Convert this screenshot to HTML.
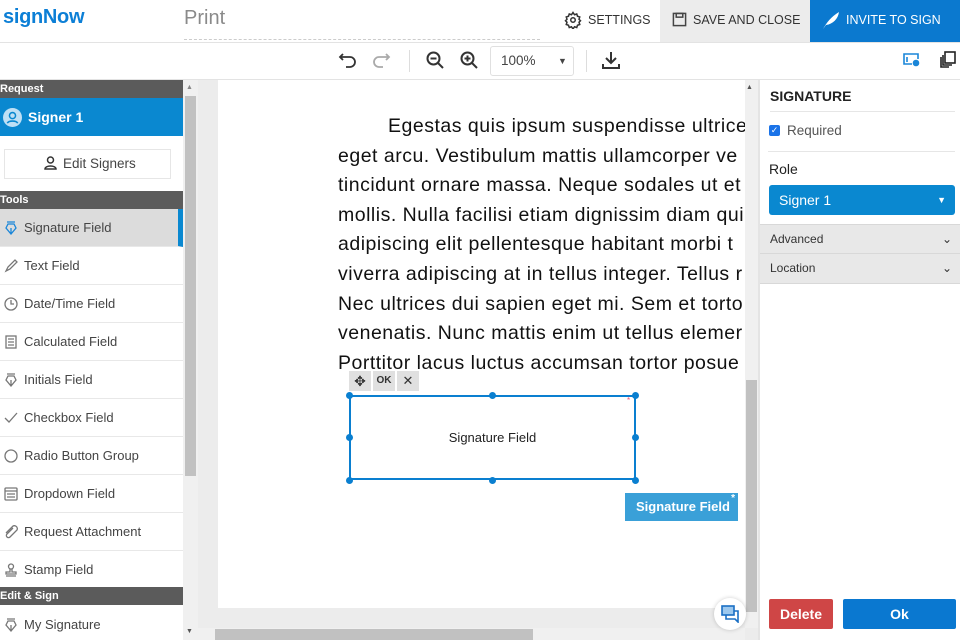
<!DOCTYPE html>
<html><head><meta charset="utf-8"><style>
*{box-sizing:border-box;margin:0;padding:0}
body{width:960px;height:640px;overflow:hidden;font-family:"Liberation Sans",sans-serif;background:#fff;position:relative;color:#333}
.a{position:absolute}
.hdr{left:0;top:0;width:960px;height:43px;border-bottom:1px solid #e3e3e3}
.tb{left:0;top:43px;width:960px;height:37px;border-bottom:1px solid #e3e3e3}
.sec{left:0;width:183px;height:18px;background:#5b5b5b;color:#fff;font-size:11px;font-weight:bold;line-height:18px;padding-left:0}
.it{left:0;width:183px;height:38px;border-bottom:1px solid #e8e8e8;font-size:13px;color:#444;line-height:37px;padding-left:24px}
.it svg{position:absolute;left:4px;top:12px}
.doc{left:338px;font-size:19.5px;letter-spacing:0.5px;color:#111;white-space:nowrap;line-height:29.6px}
.h{width:7px;height:7px;border-radius:50%;background:#0a7fd0;position:absolute}
</style></head><body>
<div class="a hdr"></div>
<div class="a" style="left:3px;top:6px;font-size:20px;font-weight:bold;color:#0c7fd6;letter-spacing:-0.3px">signNow</div>
<div class="a" style="left:184px;top:7px;font-size:20px;color:#8a8a8a">Print</div>
<div class="a" style="left:184px;top:39px;width:356px;border-top:1px dashed #ccc"></div>
<svg class="a" style="left:564px;top:11px" width="18" height="18" viewBox="0 0 24 24" fill="none" stroke="#333" stroke-width="2"><circle cx="12" cy="12" r="3"/><path d="M12 2l2 3 3-1 1 3 3 1-1 3 2 2-2 2 1 3-3 1-1 3-3-1-2 3-2-3-3 1-1-3-3-1 1-3-2-2 2-2-1-3 3-1 1-3 3 1z"/></svg>
<div class="a" style="left:588px;top:13px;font-size:12.5px;color:#333">SETTINGS</div>
<div class="a" style="left:660px;top:0;width:150px;height:42px;background:#ececec"></div>
<svg class="a" style="left:672px;top:12px" width="15" height="15" viewBox="0 0 16 16" fill="none" stroke="#444" stroke-width="1.6"><rect x="1.5" y="1.5" width="13" height="13"/><rect x="4.5" y="1.5" width="7" height="4"/></svg>
<div class="a" style="left:693px;top:13px;font-size:12.5px;color:#333">SAVE AND CLOSE</div>
<div class="a" style="left:810px;top:0;width:150px;height:42px;background:#0b79cf"></div>
<svg class="a" style="left:821px;top:10px" width="20" height="20" viewBox="0 0 20 20"><path d="M2 19C6 12 10 7 18 2 17 9 12 14 5 15z" fill="#fff"/></svg>
<div class="a" style="left:846px;top:13px;font-size:12.5px;color:#fff">INVITE TO SIGN</div>

<div class="a tb"></div>
<svg class="a" style="left:338px;top:50px" width="20" height="20" viewBox="0 0 20 20" fill="none" stroke="#333" stroke-width="1.8"><path d="M5 4L2 7l3 3M2 7h10a5 5 0 010 10H8"/></svg>
<svg class="a" style="left:371px;top:50px" width="20" height="20" viewBox="0 0 20 20" fill="none" stroke="#aaa" stroke-width="1.8"><path d="M15 4l3 3-3 3M18 7H8a5 5 0 000 10h4"/></svg>
<div class="a" style="left:409px;top:50px;height:22px;border-left:1px solid #ddd"></div>
<svg class="a" style="left:425px;top:50px" width="20" height="20" viewBox="0 0 20 20" fill="none" stroke="#333" stroke-width="2"><circle cx="8.5" cy="8.5" r="6"/><path d="M13 13l5 5M5.5 8.5h6"/></svg>
<svg class="a" style="left:459px;top:50px" width="20" height="20" viewBox="0 0 20 20" fill="none" stroke="#333" stroke-width="2"><circle cx="8.5" cy="8.5" r="6"/><path d="M13 13l5 5M5.5 8.5h6M8.5 5.5v6"/></svg>
<div class="a" style="left:490px;top:46px;width:84px;height:30px;border:1px solid #e0e0e0;border-radius:3px;font-size:13.5px;color:#444;line-height:28px;padding-left:10px">100%<span style="position:absolute;left:67px;font-size:9px">▼</span></div>
<div class="a" style="left:586px;top:50px;height:22px;border-left:1px solid #ddd"></div>
<svg class="a" style="left:601px;top:50px" width="20" height="20" viewBox="0 0 20 20" fill="none" stroke="#333" stroke-width="2"><path d="M10 2v11M5 8l5 5 5-5M2 14v4h16v-4"/></svg>
<svg class="a" style="left:903px;top:52px" width="17" height="15" viewBox="0 0 17 15" fill="none" stroke="#1a86d8" stroke-width="1.6"><path d="M9 12H1V2h14v5"/><path d="M4 5v5"/><circle cx="13" cy="11" r="2.5" fill="#1a86d8"/></svg>
<svg class="a" style="left:940px;top:51px" width="16" height="17" viewBox="0 0 16 17" fill="none" stroke="#222" stroke-width="1.6"><rect x="5" y="1" width="10" height="11"/><path d="M3 4v10h9M1 6v10h8"/></svg>

<!-- left -->
<div class="a sec" style="top:80px">Request</div>
<div class="a" style="left:0;top:98px;width:183px;height:38px;background:#0a88d0"></div>
<svg class="a" style="left:3px;top:108px" width="19" height="19" viewBox="0 0 20 20"><circle cx="10" cy="10" r="10" fill="#bfe0f5"/><circle cx="10" cy="8" r="3.2" fill="none" stroke="#0a88d0" stroke-width="1.6"/><path d="M4.5 16c1.5-3 9.5-3 11 0" fill="none" stroke="#0a88d0" stroke-width="1.6"/></svg>
<div class="a" style="left:28px;top:109px;font-size:14px;color:#fff;font-weight:bold">Signer 1</div>
<div class="a" style="left:4px;top:149px;width:167px;height:30px;border:1px solid #e6e6e6;font-size:13.5px;color:#444;line-height:28px;padding-left:58px">Edit Signers</div>
<svg class="a" style="left:44px;top:156px" width="13" height="14" viewBox="0 0 13 14" fill="none" stroke="#333" stroke-width="1.5"><circle cx="6.5" cy="4" r="3"/><path d="M1 13c0-4 11-4 11 0z"/></svg>
<div class="a sec" style="top:191px">Tools</div>
<div class="a it" style="top:209px;background:#dcdcdc;border-right:5px solid #0a88d0"><svg width="14" height="14" viewBox="0 0 14 14" fill="none" stroke="#1a86d8" stroke-width="1.3"><path d="M3 1h8M4 3h6l2 4-5 6-5-6z M7 7v6"/></svg>Signature Field</div>
<div class="a it" style="top:247px"><svg width="14" height="14" viewBox="0 0 14 14" fill="none" stroke="#777" stroke-width="1.3"><path d="M2 12l2-4 7-7 2 2-7 7z"/></svg>Text Field</div>
<div class="a it" style="top:285px"><svg width="14" height="14" viewBox="0 0 14 14" fill="none" stroke="#777" stroke-width="1.3"><circle cx="7" cy="7" r="6"/><path d="M7 3v4h3"/></svg>Date/Time Field</div>
<div class="a it" style="top:323px"><svg width="14" height="14" viewBox="0 0 14 14" fill="none" stroke="#777" stroke-width="1.3"><rect x="2" y="1" width="10" height="12"/><path d="M4 4h6M4 7h6M4 10h6"/></svg>Calculated Field</div>
<div class="a it" style="top:361px"><svg width="14" height="14" viewBox="0 0 14 14" fill="none" stroke="#777" stroke-width="1.3"><path d="M3 1h8M4 3h6l2 4-5 6-5-6z M7 7v6"/></svg>Initials Field</div>
<div class="a it" style="top:399px"><svg width="14" height="14" viewBox="0 0 14 14" fill="none" stroke="#777" stroke-width="1.3"><path d="M1 7l4 4 8-9"/></svg>Checkbox Field</div>
<div class="a it" style="top:437px"><svg width="14" height="14" viewBox="0 0 14 14" fill="none" stroke="#777" stroke-width="1.3"><circle cx="7" cy="7" r="6"/></svg>Radio Button Group</div>
<div class="a it" style="top:475px"><svg width="14" height="14" viewBox="0 0 14 14" fill="none" stroke="#777" stroke-width="1.3"><rect x="1" y="1" width="12" height="12" rx="1"/><path d="M1 4h12M3 7h8M3 10h8"/></svg>Dropdown Field</div>
<div class="a it" style="top:513px"><svg width="14" height="14" viewBox="0 0 14 14" fill="none" stroke="#777" stroke-width="1.3"><path d="M9 3L3 9a2 2 0 003 3l7-7a3 3 0 00-4-4L2 8"/></svg>Request Attachment</div>
<div class="a it" style="top:551px;height:36px;border:none"><svg width="14" height="14" viewBox="0 0 14 14" fill="none" stroke="#777" stroke-width="1.3"><circle cx="7" cy="3.5" r="2.5"/><path d="M6 6v3H2v2h10V9H8V6M2 13h10"/></svg>Stamp Field</div>
<div class="a sec" style="top:587px">Edit &amp; Sign</div>
<div class="a it" style="top:606px;border:none"><svg width="14" height="14" viewBox="0 0 14 14" fill="none" stroke="#777" stroke-width="1.3"><path d="M3 1h8M4 3h6l2 4-5 6-5-6z M7 7v6"/></svg>My Signature</div>
<div class="a" style="left:183px;top:80px;width:15px;height:560px;background:#f0f0f0"></div>
<div class="a" style="left:185px;top:96px;width:11px;height:380px;background:#c1c1c1"></div>
<div class="a" style="left:186px;top:84px;font-size:7px;color:#888">▲</div>
<div class="a" style="left:186px;top:628px;font-size:7px;color:#555">▼</div>

<!-- doc -->
<div class="a" style="left:198px;top:80px;width:562px;height:560px;background:#ececec"></div>
<div class="a" style="left:218px;top:80px;width:527px;height:528px;background:#fff;overflow:hidden">
<div class="doc a" style="left:120px;top:32px">
<div style="padding-left:50px">Egestas quis ipsum suspendisse ultrices</div>
<div>eget arcu. Vestibulum mattis ullamcorper ve</div>
<div>tincidunt ornare massa. Neque sodales ut et</div>
<div>mollis. Nulla facilisi etiam dignissim diam qui</div>
<div>adipiscing elit pellentesque habitant morbi t</div>
<div>viverra adipiscing at in tellus integer. Tellus r</div>
<div>Nec ultrices dui sapien eget mi. Sem et torto</div>
<div>venenatis. Nunc mattis enim ut tellus elemer</div>
<div>Porttitor lacus luctus accumsan tortor posue</div>
</div>
</div>
<div class="a" style="left:349px;top:371px;width:22px;height:20px;background:#e0e0e0;font-size:14px;text-align:center;line-height:20px">✥</div>
<div class="a" style="left:373px;top:371px;width:22px;height:20px;background:#e0e0e0;font-size:10px;font-weight:bold;text-align:center;line-height:20px">OK</div>
<div class="a" style="left:397px;top:371px;width:22px;height:20px;background:#e0e0e0;font-size:13px;text-align:center;line-height:20px">✕</div>
<div class="a" style="left:349px;top:395px;width:287px;height:85px;border:2px solid #0a7fd0;font-size:13px;color:#222;text-align:center;line-height:81px">Signature Field</div>
<div class="a" style="left:627px;top:396px;color:#e57;font-size:8px">*</div>
<div class="h" style="left:346px;top:392px"></div><div class="h" style="left:489px;top:392px"></div><div class="h" style="left:632px;top:392px"></div>
<div class="h" style="left:346px;top:434px"></div><div class="h" style="left:632px;top:434px"></div>
<div class="h" style="left:346px;top:477px"></div><div class="h" style="left:489px;top:477px"></div><div class="h" style="left:632px;top:477px"></div>
<div class="a" style="left:625px;top:493px;width:113px;height:28px;background:#3aa0d8;color:#fff;font-weight:bold;font-size:13px;line-height:28px;padding-left:11px">Signature Field<span style="position:absolute;right:3px;top:-8px;font-size:10px">*</span></div>
<div class="a" style="left:745px;top:80px;width:13px;height:548px;background:#f0f0f0"></div>
<div class="a" style="left:746px;top:380px;width:11px;height:232px;background:#c1c1c1"></div>
<div class="a" style="left:746px;top:84px;font-size:7px;color:#555">▲</div>
<div class="a" style="left:198px;top:628px;width:547px;height:12px;background:#f0f0f0"></div>
<div class="a" style="left:215px;top:629px;width:318px;height:11px;background:#c1c1c1"></div>
<div class="a" style="left:714px;top:598px;width:32px;height:32px;border-radius:50%;background:#fff;box-shadow:0 0 4px rgba(0,0,0,.2)"></div>
<svg class="a" style="left:721px;top:605px" width="19" height="18" viewBox="0 0 19 18" fill="none" stroke="#1a6fc4" stroke-width="1.6"><rect x="1" y="1" width="12" height="9" fill="#9cc8ee"/><path d="M5 10v4h9l3 3V6h-4"/></svg>

<!-- right -->
<div class="a" style="left:758px;top:80px;width:2px;height:560px;background:#e4e4e4"></div>
<div class="a" style="left:770px;top:88px;font-size:14px;font-weight:bold;color:#222">SIGNATURE</div>
<div class="a" style="left:770px;top:111px;width:185px;border-top:1px solid #e6e6e6"></div>
<div class="a" style="left:769px;top:125px;width:11px;height:11px;background:#1a73e8;border-radius:2px;color:#fff;font-size:9px;line-height:11px;text-align:center">✓</div>
<div class="a" style="left:787px;top:123px;font-size:13.5px;color:#555">Required</div>
<div class="a" style="left:768px;top:151px;width:187px;border-top:1px solid #e6e6e6"></div>
<div class="a" style="left:769px;top:161px;font-size:14px;color:#222">Role</div>
<div class="a" style="left:769px;top:185px;width:186px;height:30px;background:#0a88d0;border-radius:3px;color:#fff;font-size:14px;line-height:30px;padding-left:10px">Signer 1<span style="position:absolute;right:9px;font-size:9px">▼</span></div>
<div class="a" style="left:760px;top:224px;width:200px;height:30px;background:#e8e8e8;border-top:1px solid #d8d8d8;border-bottom:1px solid #d8d8d8;font-size:12px;color:#333;line-height:29px;padding-left:10px">Advanced<span style="position:absolute;right:8px;font-size:12px">⌄</span></div>
<div class="a" style="left:760px;top:254px;width:200px;height:30px;background:#e8e8e8;border-bottom:1px solid #d8d8d8;font-size:12px;color:#333;line-height:29px;padding-left:10px">Location<span style="position:absolute;right:8px;font-size:12px">⌄</span></div>
<div class="a" style="left:769px;top:599px;width:64px;height:30px;background:#cf4646;border-radius:2px;color:#fff;font-weight:bold;font-size:14px;text-align:center;line-height:30px">Delete</div>
<div class="a" style="left:843px;top:599px;width:113px;height:30px;background:#0a78d0;border-radius:2px;color:#fff;font-weight:bold;font-size:14px;text-align:center;line-height:30px">Ok</div>
</body></html>
